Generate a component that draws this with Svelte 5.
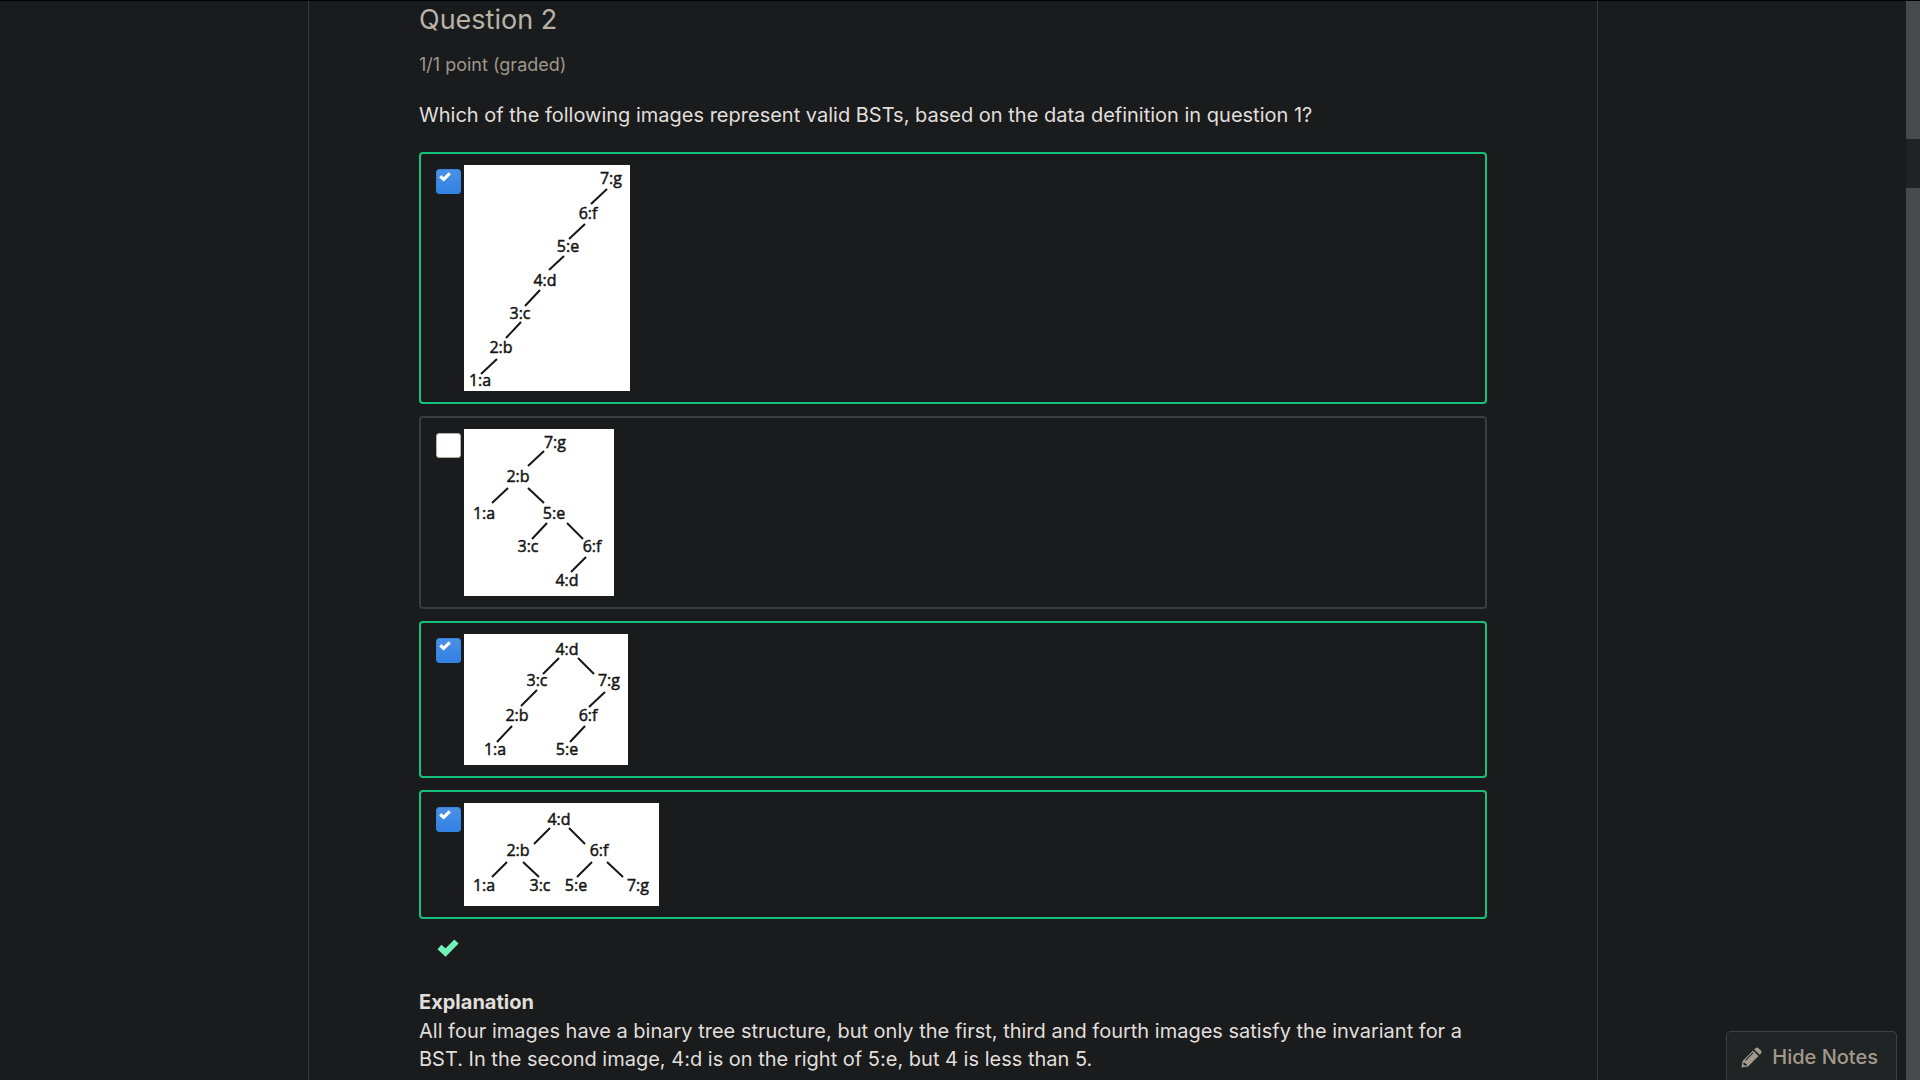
<script>
  let options = $state([
    {
      id: 'choice-1', checked: true, correct: true, width: 166, height: 226,
      nodes: [['7:g', 147, 19], ['6:f', 124, 54], ['5:e', 104, 87], ['4:d', 81, 121], ['3:c', 56, 154], ['2:b', 37, 188], ['1:a', 16, 221]],
      edges: [[143, 24, 127, 39], [121, 59, 105, 74], [100, 91, 85, 105], [76, 125, 61, 141], [57, 157, 42, 173], [33, 194, 17, 209]]
    },
    {
      id: 'choice-2', checked: false, correct: false, width: 150, height: 167,
      nodes: [['7:g', 91, 19], ['2:b', 54, 53], ['1:a', 20, 90], ['5:e', 90, 90], ['3:c', 64, 123], ['6:f', 128, 123], ['4:d', 103, 157]],
      edges: [[80, 22, 64, 37], [44, 59, 28, 74], [64, 59, 80, 74], [83, 94, 68, 110], [103, 94, 119, 110], [122, 128, 107, 143]]
    },
    {
      id: 'choice-3', checked: true, correct: true, width: 164, height: 131,
      nodes: [['4:d', 103, 21], ['3:c', 73, 52], ['7:g', 145, 52], ['2:b', 53, 87], ['6:f', 124, 87], ['1:a', 31, 121], ['5:e', 103, 121]],
      edges: [[95, 24, 79, 40], [114, 24, 130, 40], [73, 56, 57, 72], [141, 58, 125, 73], [48, 92, 33, 108], [121, 92, 106, 108]]
    },
    {
      id: 'choice-4', checked: true, correct: true, width: 195, height: 103,
      nodes: [['4:d', 95, 22], ['2:b', 54, 53], ['6:f', 135, 53], ['1:a', 20, 88], ['3:c', 76, 88], ['5:e', 112, 88], ['7:g', 174, 88]],
      edges: [[86, 25, 70, 41], [105, 25, 121, 41], [43, 59, 28, 74], [59, 59, 75, 74], [128, 59, 113, 74], [143, 59, 159, 74]]
    }
  ]);
</script>

<div class="shell">
  <main>
    <section class="column">
      <h3>Question 2</h3>
      <p class="points">1/1 point (graded)</p>
      <form>
        <fieldset>
          <legend>Which of the following images represent valid BSTs, based on the data definition in question 1?</legend>
          <div class="choices">
            {#each options as option (option.id)}
              <label class="choice" class:correct={option.correct} for={option.id}>
                <span class="tick">
                  <input type="checkbox" id={option.id} bind:checked={option.checked} />
                  {#if option.checked}
                    <svg class="mark" viewBox="0 0 22 17" aria-hidden="true"><path d="M2 8 8.500 14 20 2.500" /></svg>
                  {/if}
                </span>
                <svg class="tree" width={option.width} height={option.height} viewBox="0 0 {option.width} {option.height}">
                  {#each option.edges as [x1, y1, x2, y2]}
                    <line {x1} {y1} {x2} {y2} />
                  {/each}
                  {#each option.nodes as [name, x, y]}
                    <text {x} {y}>{name}</text>
                  {/each}
                </svg>
              </label>
            {/each}
          </div>
        </fieldset>
      </form>
      <div class="status">
        <svg viewBox="0 0 22 17" role="img" aria-label="correct"><path d="M2.500 8 8.500 13.500 19.500 2.500" /></svg>
      </div>
      <div class="explanation">
        <strong>Explanation</strong>
        <p>All four images have a binary tree structure, but only the first, third and fourth images satisfy the invariant for a BST. In the second image, 4:d is on the right of 5:e, but 4 is less than 5.</p>
      </div>
    </section>
  </main>
  <div class="scroll" aria-hidden="true"><div class="thumb"></div></div>
</div>

<button class="notes" type="button">
  <svg viewBox="0 0 21 21" aria-hidden="true">
    <path fill-rule="evenodd" d="M0.500 20.500 1.500 14 12 3.500 17.500 9 7 19.500ZM2.800 15 2.300 17.200 3.800 18.700 6 18.200 5.500 16.800 4 16.500ZM4.800 13.700 12.500 6 11.800 5.300 4.100 13Z" />
    <path d="M13.200 2.300 14.800 0.900Q16 0 17.200 0.900L20.100 3.800Q21 5 20.100 6.200L18.700 7.800Z" />
  </svg>
  Hide Notes
</button>

<style>
  :global(body) {
    margin: 0;
    background: #1a1b1d;
    color: #e0dfdb;
    font-family: Inter, "Liberation Sans", sans-serif;
  }

  .shell {
    display: flex;
    box-sizing: border-box;
    height: 100vh;
    border-top: 1px solid #000;
    overflow: hidden;
    font-size: 20px;
    line-height: 28px;
  }

  main {
    flex: 1;
    display: flex;
    justify-content: center;
  }

  .column {
    flex: 1;
    box-sizing: border-box;
    max-width: 1290px;
    padding: 0 110px;
    border: solid #36393b;
    border-width: 0 1px;
  }

  h3 {
    margin: 0;
    color: #b8b2a8;
    font-size: 27px;
    font-weight: 400;
    line-height: 38px;
  }

  .points {
    margin: 12px 0 22px;
    color: #9f978b;
    font-size: 18px;
    line-height: 28px;
  }

  fieldset {
    min-width: 0;
    margin: 0;
    padding: 0;
    border: 0;
  }

  legend {
    padding: 0;
  }

  .choices {
    display: flex;
    flex-direction: column;
    gap: 12px;
    margin-top: 23px;
  }

  .choice {
    display: flex;
    gap: 3px;
    padding: 11px 15px;
    border: 2px solid #3a3c3e;
    border-radius: 4px;
  }

  .choice.correct {
    border-color: #17c17b;
  }

  .tick {
    position: relative;
    height: 25px;
    margin-top: 4px;
  }

  input {
    display: block;
    appearance: none;
    box-sizing: border-box;
    width: 25px;
    height: 25px;
    margin: 0;
    border: 1px solid #b9aea0;
    border-radius: 3px;
    background: #fff;
  }

  input:checked {
    border-color: #3584e4;
    background: linear-gradient(#4b90e6, #3281e3);
  }

  .mark {
    position: absolute;
    top: 3px;
    left: 3px;
    width: 12px;
    height: 9px;
    overflow: visible;
    fill: none;
    stroke: #fff;
    stroke-width: 6;
  }

  .tree {
    background: #fff;
    font-family: "Open Sans", "Noto Sans", sans-serif;
    font-size: 16px;
  }

  .tree text {
    fill: #151515;
    stroke: #151515;
    stroke-width: 0.5;
    text-anchor: middle;
  }

  .tree line {
    stroke: #151515;
    stroke-width: 2;
  }

  .status {
    display: flex;
    padding: 20px 18px 0;
  }

  .status svg {
    width: 22px;
    height: 17px;
    overflow: visible;
    fill: none;
    stroke: #72f0b8;
    stroke-width: 6;
  }

  .explanation {
    margin-top: 32px;
  }

  .explanation p {
    margin: 1px 0 0;
  }

  .scroll {
    width: 14px;
    padding-top: 138px;
    box-sizing: border-box;
    background: #454a4d;
  }

  .thumb {
    height: 49px;
    background: #202324;
  }

  .notes {
    position: fixed;
    right: 23px;
    bottom: 0;
    display: flex;
    align-items: center;
    gap: 10px;
    height: 49px;
    padding: 2px 18px 0 14px;
    border: 1px solid #3c4143;
    border-bottom: 0;
    border-radius: 5px 5px 0 0;
    background: #202425;
    color: #a39a8d;
    font: 500 20px/28px Inter, "Liberation Sans", sans-serif;
  }

  .notes svg {
    width: 21px;
    height: 21px;
    fill: currentColor;
  }
</style>
